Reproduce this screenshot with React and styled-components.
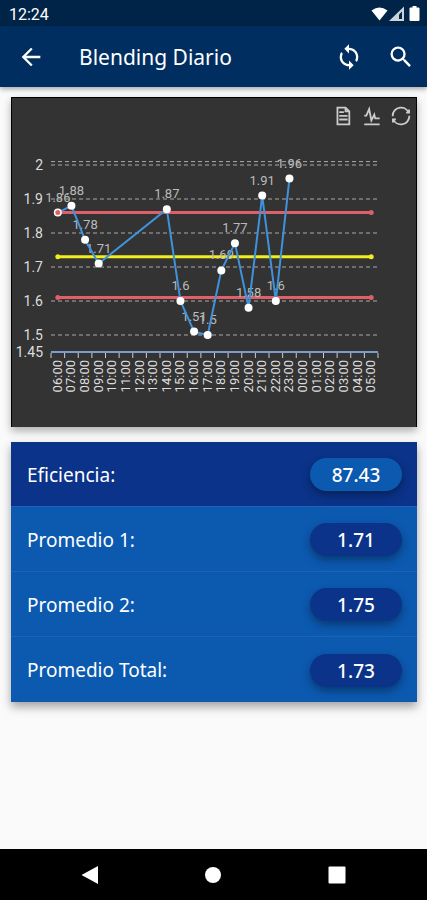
import styled, { createGlobalStyle } from 'styled-components';
import { MdArrowBack, MdSearch, MdSync } from 'react-icons/md';

const hours = Array.from(
  { length: 24 },
  (_, i) => `${String((i + 6) % 24).padStart(2, '0')}:00`
);

const blending = [
  { hour: '06:00', value: 1.86 },
  { hour: '07:00', value: 1.88 },
  { hour: '08:00', value: 1.78 },
  { hour: '09:00', value: 1.71 },
  { hour: '14:00', value: 1.87 },
  { hour: '15:00', value: 1.6 },
  { hour: '16:00', value: 1.51 },
  { hour: '17:00', value: 1.5 },
  { hour: '18:00', value: 1.69 },
  { hour: '19:00', value: 1.77 },
  { hour: '20:00', value: 1.58 },
  { hour: '21:00', value: 1.91 },
  { hour: '22:00', value: 1.6 },
  { hour: '23:00', value: 1.96 },
];

const limits = [
  { value: 1.86, color: '#e0606a' },
  { value: 1.73, color: '#f0ee1c' },
  { value: 1.61, color: '#e0606a' },
];

const ticks = [2, 1.9, 1.8, 1.7, 1.6, 1.5, 1.45];
const gridValues = [2.01, 2, 1.9, 1.8, 1.7, 1.6, 1.5];

const averages = [
  { label: 'Eficiencia:', value: '87.43', featured: true },
  { label: 'Promedio 1:', value: '1.71' },
  { label: 'Promedio 2:', value: '1.75' },
  { label: 'Promedio Total:', value: '1.73' },
];

const LEFT = 39;
const RIGHT = 366;
const BOTTOM = 224;
const STEP = (RIGHT - LEFT) / hours.length;

const xOf = (hour) => LEFT + STEP * (hours.indexOf(hour) + 0.5);
const yOf = (value) => BOTTOM - (value - 1.45) * 340;

const toolIcons = [
  {
    label: 'Ver datos',
    path: 'M17.5,17.3H33M45.4,29.5h-28M11.5,2v56H51V14.8L38.4,2H11.5zM38.4,2.2v12.7H51M45.4,41.7h-28',
  },
  {
    label: 'Gráfico de líneas',
    path: 'M4.1,28.9h7.1l9.3-22l7.4,38l9.7-19.7l3,12.8h14.9M4.1,58h51.4',
  },
  {
    label: 'Restaurar',
    path: 'M47,18.9h9.8V8.7M56.3,20.1C52.1,9,40.5,0.6,26.8,2.1C12.6,3.7,1.6,16.2,2.1,30.6M13,41.1H3.1v10.2M3.7,39.9c4.2,11.1,15.8,19.5,29.5,18c14.2-1.6,25.2-14.1,24.7-28.5',
  },
];

const Chart = () => {
  const line = blending.map((p) => `${xOf(p.hour)},${yOf(p.value)}`).join(' ');
  return (
    <ChartSvg viewBox='0 0 404 299' role='img' aria-label='Blending Diario'>
      {gridValues.map((value) => (
        <line
          key={value}
          className='grid'
          x1={LEFT}
          x2={RIGHT}
          y1={yOf(value)}
          y2={yOf(value)}
        />
      ))}
      {ticks.map((value) => (
        <text key={value} className='tick' x='31' y={yOf(value) + 5}>
          {value}
        </text>
      ))}
      <line className='axis' x1={LEFT} x2={RIGHT} y1={BOTTOM} y2={BOTTOM} />
      {Array.from({ length: hours.length + 1 }, (_, i) => (
        <line
          key={i}
          className='notch'
          x1={LEFT + STEP * i}
          x2={LEFT + STEP * i}
          y1={BOTTOM + 1}
          y2={BOTTOM + 6}
        />
      ))}
      {hours.map((hour) => (
        <text
          key={hour}
          className='hour'
          transform={`translate(${xOf(hour) + 4} ${BOTTOM + 8}) rotate(-90)`}
        >
          {hour}
        </text>
      ))}
      {limits.map(({ value, color }) => (
        <line
          key={value}
          className='limit'
          stroke={color}
          x1={xOf('06:00')}
          x2={xOf('05:00')}
          y1={yOf(value)}
          y2={yOf(value)}
        />
      ))}
      {blending.map(({ hour, value }) => (
        <text key={hour} className='value' x={xOf(hour)} y={yOf(value) - 11}>
          {value}
        </text>
      ))}
      <polyline className='series' points={line} />
      {blending.map(({ hour, value }) => (
        <circle
          key={hour}
          cx={xOf(hour)}
          cy={yOf(value)}
          r='4'
          fill='#fff'
        />
      ))}
      {limits.map(({ value, color }) => (
        <g key={value} fill={color}>
          <circle cx={xOf('06:00')} cy={yOf(value)} r='2.5' />
          <circle cx={xOf('05:00')} cy={yOf(value)} r='2.5' />
        </g>
      ))}
    </ChartSvg>
  );
};

const App = () => {
  return (
    <Page>
      <GlobalStyle />
      <StatusBar>
        <span>12:24</span>
        <svg width='50' height='16' viewBox='0 0 50 16' fill='#fff'>
          <path d='M0.500 4.500Q8.500 -1.500 16.500 4.500L8.500 14.500z' />
          <path d='M18 15L33 0.500V15z' opacity='0.8' />
          <path d='M28 8.500L31 5.500V13H28z' fill='#002447' />
          <path d='M41.500 1.500V0h4v1.500h2q1 0 1 1V14q0 1-1 1h-8q-1 0-1-1V2.500q0-1 1-1z' />
        </svg>
      </StatusBar>
      <AppBar>
        <IconButton aria-label='Volver'>
          <MdArrowBack />
        </IconButton>
        <h1>Blending Diario</h1>
        <IconButton aria-label='Actualizar'>
          <MdSync />
        </IconButton>
        <IconButton aria-label='Buscar'>
          <MdSearch />
        </IconButton>
      </AppBar>
      <Content>
        <ChartCard>
          <Toolbox>
            {toolIcons.map(({ label, path }) => (
              <button key={label} type='button' aria-label={label}>
                <svg viewBox='0 0 60 60'>
                  <path d={path} />
                </svg>
              </button>
            ))}
          </Toolbox>
          <Chart />
        </ChartCard>
        <Summary>
          {averages.map(({ label, value, featured }) => (
            <SummaryRow key={label} $featured={featured}>
              <dt>{label}</dt>
              <Pill $featured={featured}>{value}</Pill>
            </SummaryRow>
          ))}
        </Summary>
      </Content>
      <NavBar>
        <button type='button' aria-label='Atrás'>
          <svg viewBox='0 0 18 18'>
            <path d='M0.500 9L17 0V18z' />
          </svg>
        </button>
        <button type='button' aria-label='Inicio'>
          <svg viewBox='0 0 18 18'>
            <circle cx='9' cy='9' r='8' />
          </svg>
        </button>
        <button type='button' aria-label='Recientes'>
          <svg viewBox='0 0 18 18'>
            <rect x='0.500' y='0.500' width='17' height='17' rx='1' />
          </svg>
        </button>
      </NavBar>
    </Page>
  );
};

const GlobalStyle = createGlobalStyle`
  * {
    box-sizing: border-box;
    margin: 0;
    padding: 0;
  }
  body {
    background: #fafafa;
    font-family: 'Noto Sans', sans-serif;
  }
  button {
    border: none;
    background: transparent;
    cursor: pointer;
  }
`;

const Page = styled.div`
  min-height: 100vh;
  display: flex;
  flex-direction: column;
`;

const StatusBar = styled.div`
  height: 26px;
  padding: 2px 6px 0 9px;
  display: flex;
  align-items: center;
  justify-content: space-between;
  background: #002447;
  color: #fff;
  font-family: Roboto, sans-serif;
  font-size: 16px;
`;

const AppBar = styled.header`
  height: 61px;
  padding: 0 12px 0 17px;
  display: flex;
  align-items: center;
  gap: 24px;
  background: #002e60;
  box-shadow: 0 2px 5px rgba(0, 0, 0, 0.35);
  color: #fff;
  h1 {
    flex: 1;
    padding-left: 10px;
    font-size: 21px;
    font-weight: 400;
    line-height: 28px;
  }
`;

const IconButton = styled.button`
  display: flex;
  color: #fff;
  font-size: 28px;
`;

const Content = styled.main`
  flex: 1;
  padding: 10px 10px 24px 11px;
  display: flex;
  flex-direction: column;
  gap: 15px;
`;

const ChartCard = styled.section`
  border: 1px solid #000;
  border-bottom: none;
  background: #333;
  box-shadow: 0 4px 8px rgba(0, 0, 0, 0.3);
`;

const Toolbox = styled.div`
  height: 30px;
  padding: 6px 6px 0 0;
  display: flex;
  justify-content: flex-end;
  gap: 11px;
  svg {
    display: block;
    width: 18px;
    height: 18px;
    overflow: visible;
  }
  path {
    fill: none;
    stroke: #ccc;
    stroke-width: 6;
  }
`;

const ChartSvg = styled.svg`
  display: block;
  width: 100%;
  font-family: Roboto, sans-serif;
  font-size: 13px;
  .grid {
    stroke: #aaa;
    stroke-dasharray: 4 3;
  }
  .axis {
    stroke: #7c9bd0;
    stroke-width: 2;
  }
  .notch {
    stroke: #ccc;
  }
  .tick {
    fill: #ddd;
    font-size: 14px;
    text-anchor: end;
  }
  .hour {
    fill: #ddd;
    text-anchor: end;
  }
  .limit {
    stroke-width: 3;
  }
  .series {
    fill: none;
    stroke: #3f92dc;
    stroke-width: 2;
  }
  .value {
    fill: #bbb;
    text-anchor: middle;
  }
`;

const Summary = styled.dl`
  background: #0c59b0;
  box-shadow: 0 5px 9px rgba(0, 0, 0, 0.35);
`;

const SummaryRow = styled.div`
  height: 65px;
  padding: 1px 15px 0 16px;
  display: flex;
  align-items: center;
  justify-content: space-between;
  border-bottom: 1px solid #1c62b8;
  background: ${({ $featured }) => ($featured ? '#0a3389' : 'transparent')};
  color: #fff;
  font-size: 19px;
  &:last-child {
    border-bottom: none;
  }
`;

const Pill = styled.dd`
  width: 92px;
  height: 33px;
  border-radius: 17px;
  background: ${({ $featured }) => ($featured ? '#0c59b0' : '#0a3389')};
  box-shadow: 0 4px 8px rgba(0, 0, 0, 0.35);
  font-size: 19px;
  font-weight: 500;
  line-height: 34px;
  text-align: center;
`;

const NavBar = styled.nav`
  height: 51px;
  padding: 0 28px;
  display: flex;
  align-items: center;
  justify-content: space-around;
  background: #000;
  svg {
    display: block;
    width: 18px;
    height: 18px;
    fill: #fff;
  }
`;

export default App;
